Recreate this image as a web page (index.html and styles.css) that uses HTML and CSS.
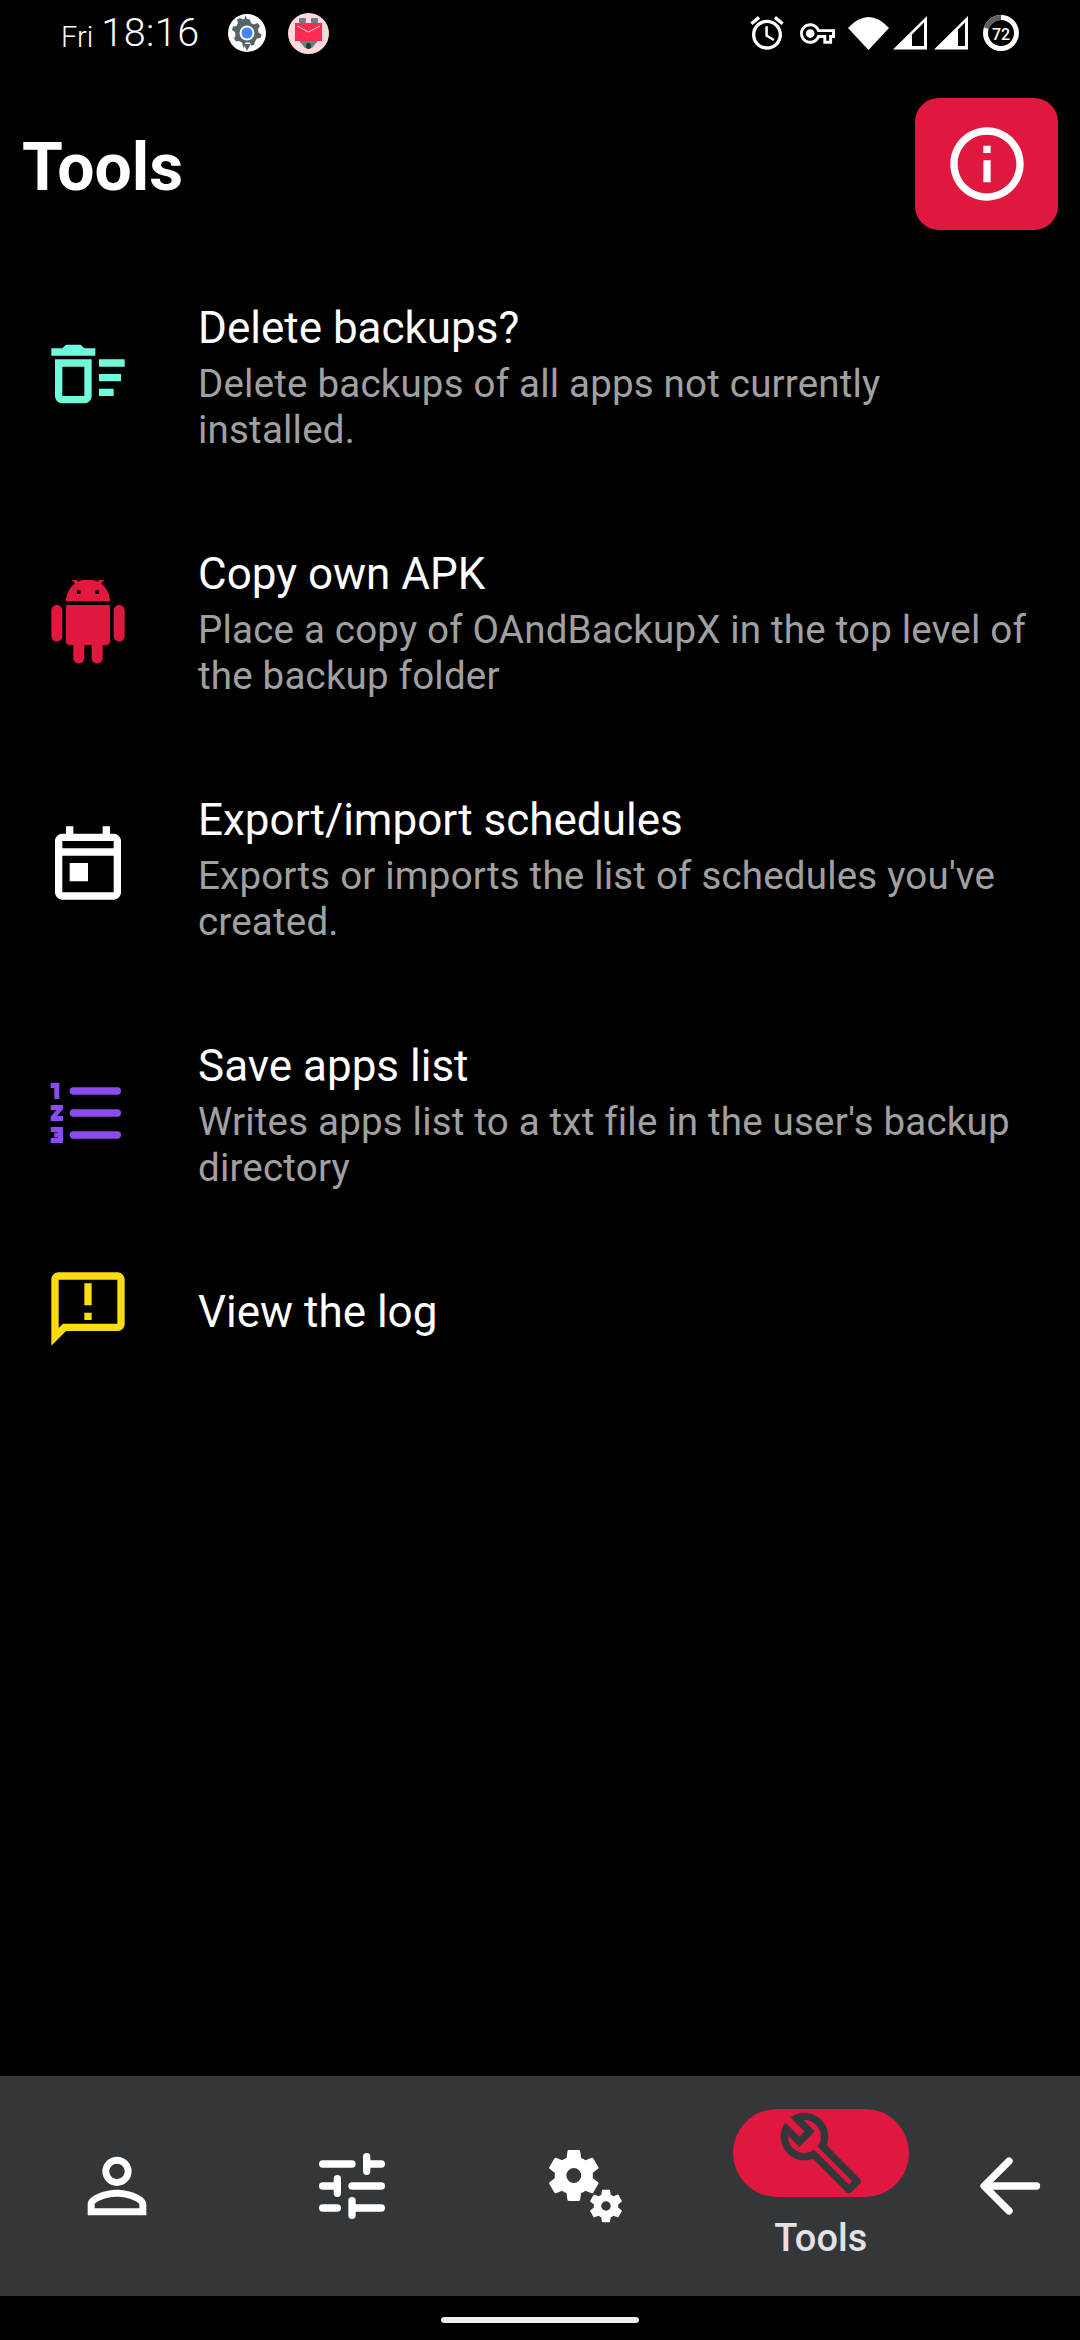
FILE: index.html
```html
<!DOCTYPE html>
<html lang="en">
<head>
<meta charset="utf-8">
<title>Tools</title>
<link rel="stylesheet" href="styles.css">
</head>
<body>
<div class="screen">
  <div class="status">
    <div class="status-left">
      <span class="day">Fri</span>
      <span class="clock">18:16</span>
      <svg class="notif-gear" viewBox="0 0 38 38"><circle cx="19" cy="19" r="19" fill="#fff"/><path fill="#57636b" d="M19 5l3 .5 1 3.500 3 1.500 3.500-1.500 2.500 3-2 3 .5 3.500 3 2-1 3.500-3.500.5-2 3-1 3.500-3 .5-1-3-3 0-1.500 0-2 6-1.500-6-3-1.500-3 .5-2-3 1.500-3-.5-3.500-3-2 1-3.500 3.500-.5 1.500-3-1-3.500 3-1.500 3 1.500 1.500-.5 1-3.500z"/><path fill="#57636b" d="M15.500 30h7L19 37z"/><circle cx="19" cy="19" r="7.500" fill="#fff"/><circle cx="19" cy="19" r="5.500" fill="#4285f4"/></svg>
      <svg class="notif-mail" viewBox="0 0 41 41"><circle cx="20.500" cy="20.500" r="20.500" fill="#ffd9de"/><rect x="11" y="5" width="7" height="5" rx="1" fill="#6f7f88"/><rect x="23" y="5" width="7" height="5" rx="1" fill="#6f7f88"/><path fill="#6f7f88" d="M12 26h17v3l-5 6H17l-5-6z"/><rect x="18" y="30" width="5" height="6" rx="2" fill="#2c3438"/><rect x="7" y="10" width="27" height="18" fill="#ff2a52"/><path fill="none" stroke="#ffd9de" stroke-width="1" d="M9 13l11.500 6L32 13"/></svg>
    </div>
    <div class="status-right">
      <svg class="si-alarm" viewBox="0 0 24 24"><path fill="#fff" d="M22 5.720l-4.600-3.860-1.290 1.530 4.600 3.860L22 5.720zM7.880 3.390L6.600 1.860 2 5.710l1.290 1.530 4.590-3.850zM12.500 8H11v6l4.750 2.850.75-1.230-4-2.370V8zM12 4c-4.970 0-9 4.030-9 9s4.030 9 9 9 9-4.030 9-9-4.030-9-9-9zm0 16c-3.870 0-7-3.130-7-7s3.130-7 7-7 7 3.130 7 7-3.130 7-7 7z"/></svg>
      <svg class="si-key" viewBox="0 0 24 24"><path fill="#fff" d="M22 19h-6v-4h-2.680c-1.140 2.420-3.600 4-6.320 4-3.860 0-7-3.140-7-7s3.140-7 7-7c2.720 0 5.170 1.580 6.320 4H24v6h-2v4zm-4-2h2v-4h2v-2H11.940l-.23-.67C11.010 8.340 9.110 7 7 7c-2.760 0-5 2.240-5 5s2.240 5 5 5c2.110 0 4.010-1.340 4.710-3.330l.23-.67H18v4zM7 15c-1.650 0-3-1.350-3-3s1.350-3 3-3 3 1.350 3 3-1.350 3-3 3z"/></svg>
      <svg class="si-wifi" viewBox="0 0 41 33"><path fill="#fff" d="M0 11Q20.500-11 41 11L20.500 33z"/></svg>
      <svg class="si-signal" viewBox="0 0 34 34"><path fill="#fff" fill-rule="evenodd" d="M0 33.500L34 0v33.500zM19 18.500V30h12V6.500z"/></svg>
      <svg class="si-signal" viewBox="0 0 34 34"><path fill="#fff" fill-rule="evenodd" d="M0 33.500L34 0v33.500zM24 13.500V30h7V6.500z"/></svg>
      <svg class="si-batt" viewBox="0 0 36 36"><circle cx="18" cy="18" r="15.500" fill="none" stroke="#fff" stroke-width="5"/><path fill="none" stroke="#5f5f5f" stroke-width="5" d="M3.300 13.200A15.500 15.500 0 0 1 18 2.500"/><text class="batt-text" x="18" y="24.500" text-anchor="middle">72</text></svg>
    </div>
  </div>

  <header class="header">
    <h1 class="title">Tools</h1>
    <button class="info-btn" type="button">
      <svg class="icon" viewBox="0 0 24 24"><path fill="#fff" d="M11 7h2v2h-2zm0 4h2v6h-2zm1-9C6.480 2 2 6.480 2 12s4.480 10 10 10 10-4.480 10-10S17.520 2 12 2zm0 18c-4.410 0-8-3.590-8-8s3.590-8 8-8 8 3.590 8 8-3.590 8-8 8z"/></svg>
    </button>
  </header>

  <main class="list">
    <div class="row">
      <svg class="icon row-icon" viewBox="0 1.090 24 24"><path fill="#70fbdc" d="M15 16h4v2h-4zm0-8h7v2h-7zm0 4h6v2h-6zM3 18c0 1.100.9 2 2 2h6c1.100 0 2-.9 2-2V8H3v10zm2-8h6v8H5v-8zm5-6H6L5 5H2v2h12V5h-3z"/></svg>
      <div class="row-text">
        <div class="row-title">Delete backups?</div>
        <div class="row-sub">Delete backups of all apps not currently installed.</div>
      </div>
    </div>
    <div class="row">
      <svg class="icon row-icon" viewBox="0 1.200 24 24"><path fill="#e0183f" d="M6 18c0 .55.45 1 1 1h1v3.500c0 .83.67 1.500 1.500 1.500s1.500-.67 1.500-1.500V19h2v3.500c0 .83.67 1.500 1.500 1.500s1.500-.67 1.500-1.500V19h1c.55 0 1-.45 1-1V8H6v10zM3.500 8C2.670 8 2 8.670 2 9.500v7c0 .83.67 1.500 1.500 1.500S5 17.330 5 16.500v-7C5 8.670 4.330 8 3.500 8zm17 0c-.83 0-1.500.67-1.500 1.500v7c0 .83.67 1.500 1.500 1.500s1.500-.67 1.500-1.500v-7c0-.83-.67-1.500-1.500-1.500zm-4.970-5.840l1.300-1.300c.2-.2.2-.51 0-.71-.2-.2-.51-.2-.71 0l-1.480 1.480C13.850 1.230 12.950 1 12 1c-.96 0-1.860.23-2.660.63L7.850.15c-.2-.2-.51-.2-.71 0-.2.2-.2.51 0 .71l1.310 1.310C6.970 3.260 6 5.010 6 7h12c0-1.990-.97-3.750-2.470-4.840zM10 5H9V4h1v1zm5 0h-1V4h1v1z"/></svg>
      <div class="row-text">
        <div class="row-title">Copy own APK</div>
        <div class="row-sub">Place a copy of OAndBackupX in the top level of the backup folder</div>
      </div>
    </div>
    <div class="row">
      <svg class="icon row-icon" viewBox="0 1.910 24 24"><path fill="#fff" d="M19 4h-1V2h-2v2H8V2H6v2H5c-1.110 0-2 .9-2 2v14c0 1.100.89 2 2 2h14c1.100 0 2-.9 2-2V6c0-1.100-.9-2-2-2zm0 16H5V10h14v10zm0-12H5V6h14v2zM7 12h5v5H7z"/></svg>
      <div class="row-text">
        <div class="row-title">Export/import schedules</div>
        <div class="row-sub">Exports or imports the list of schedules you've created.</div>
      </div>
    </div>
    <div class="row">
      <svg class="icon row-icon" viewBox="0 0.820 24 24"><path fill="#8a4cf0" stroke="#8a4cf0" stroke-width=".35" d="M2 17h2v.5H3v1h1v.5H2v1h3v-4H2v1zm1-9h1V4H2v1h1v3zm-1 3h1.800L2 13.100v.9h3v-1H3.200L5 10.900V10H2v1z"/><rect x="7" y="5" width="14" height="2" rx="1" fill="#8a4cf0"/><rect x="7" y="11" width="14" height="2" rx="1" fill="#8a4cf0"/><rect x="7" y="17" width="14" height="2" rx="1" fill="#8a4cf0"/></svg>
      <div class="row-text">
        <div class="row-title">Save apps list</div>
        <div class="row-sub">Writes apps list to a txt file in the user's backup directory</div>
      </div>
    </div>
    <div class="row">
      <svg class="icon row-icon" viewBox="0 0.820 24 24"><path fill="#fbdc14" d="M20 2H4c-1.100 0-2 .9-2 2v18l4-4h14c1.100 0 2-.9 2-2V4c0-1.100-.9-2-2-2zm0 14H5.170L4 17.170V4h16v12zM11 13h2v2h-2zm0-8h2v6h-2z"/></svg>
      <div class="row-text">
        <div class="row-title">View the log</div>
      </div>
    </div>
  </main>

  <nav class="nav">
    <div class="nav-item">
      <svg class="icon" viewBox="0 0 24 24"><path fill="#fff" d="M12 5.900c1.160 0 2.100.94 2.100 2.100s-.94 2.100-2.100 2.100S9.900 9.160 9.900 8s.94-2.100 2.100-2.100m0 9c2.970 0 6.100 1.460 6.100 2.100v1.100H5.900V17c0-.64 3.130-2.100 6.100-2.100M12 4C9.790 4 8 5.790 8 8s1.790 4 4 4 4-1.790 4-4-1.790-4-4-4zm0 9c-2.670 0-8 1.340-8 4v3h16v-3c0-2.660-5.330-4-8-4z"/></svg>
    </div>
    <div class="nav-item">
      <svg class="icon" viewBox="0 0 24 24"><path fill="none" stroke="#fff" stroke-width="2" stroke-linecap="round" d="M4 6h8M16 4v4M16 6h4M4 12h4M8 10v4M12 12h8M4 18h4M12 16v4M12 18h8"/></svg>
    </div>
    <div class="nav-item">
      <svg class="icon" viewBox="0 0 88 88">
        <defs><path id="cog" fill-rule="evenodd" d="M19.140 12.940c.04-.3.06-.61.06-.94 0-.32-.02-.64-.07-.94l2.030-1.580c.18-.14.23-.41.12-.61l-1.920-3.320c-.12-.22-.37-.29-.59-.22l-2.390.96c-.5-.38-1.030-.7-1.620-.94l-.36-2.540c-.04-.24-.24-.41-.48-.41h-3.840c-.24 0-.43.17-.47.41l-.36 2.540c-.59.24-1.130.57-1.620.94l-2.390-.96c-.22-.08-.47 0-.59.22L2.740 8.870c-.12.21-.08.47.12.61l2.030 1.580c-.05.3-.09.63-.09.94s.02.64.07.94l-2.030 1.580c-.18.14-.23.41-.12.61l1.920 3.320c.12.22.37.29.59.22l2.390-.96c.5.38 1.030.7 1.620.94l.36 2.540c.05.24.24.41.48.41h3.840c.24 0 .44-.17.47-.41l.36-2.540c.59-.24 1.130-.56 1.620-.94l2.390.96c.22.08.47 0 .59-.22l1.920-3.320c.12-.22.07-.47-.12-.61l-2.010-1.580zM12 14.800a2.800 2.800 0 1 1 0-5.600 2.800 2.800 0 0 1 0 5.600z"/></defs>
        <use href="#cog" fill="#fff" transform="translate(0 1.700) scale(2.650)"/>
        <use href="#cog" fill="#fff" transform="translate(43.600 43.600) scale(1.700)"/>
      </svg>
    </div>
    <div class="nav-item nav-item-active">
      <div class="pill">
        <svg class="icon" viewBox="0 0 24 24"><path fill="#33373a" d="M22.610 18.990l-9.080-9.080c.93-2.340.45-5.100-1.440-7C9.790.61 6.210.4 3.660 2.260L7.500 6.110 6.080 7.520 2.250 3.690C.39 6.230.6 9.820 2.900 12.110c1.860 1.860 4.570 2.350 6.890 1.480l9.110 9.110c.39.39 1.020.39 1.410 0l2.300-2.300c.4-.38.4-1.010 0-1.410zm-3 1.600l-9.460-9.460c-.61.45-1.290.72-2 .82-1.360.2-2.790-.21-3.830-1.250C3.370 9.760 2.930 8.500 3 7.260l3.090 3.090 4.240-4.240-3.090-3.090c1.240-.07 2.490.37 3.440 1.310 1.080 1.080 1.490 2.570 1.240 3.960-.12.71-.42 1.370-.88 1.960l9.450 9.450-.88.88z"/></svg>
      </div>
      <span class="nav-label">Tools</span>
    </div>
    <div class="nav-item">
      <svg class="icon" viewBox="0 0 24 24"><path fill="none" stroke="#fff" stroke-width="2" stroke-linecap="round" stroke-linejoin="round" d="M19.500 12H5.500M12 5.200L5.200 12 12 18.800"/></svg>
    </div>
  </nav>

  <div class="gesture"><div class="gesture-bar"></div></div>
</div>
</body>
</html>
```

FILE: styles.css
```css
* { box-sizing: border-box; }
html, body { margin: 0; padding: 0; background: #000; }
.screen {
  width: 1080px;
  height: 2340px;
  display: flex;
  flex-direction: column;
  background: #000;
  color: #fff;
  font-family: Roboto, "Noto Sans", sans-serif;
  overflow: hidden;
}
.icon { width: 88px; height: 88px; display: block; flex: none; }

.status {
  height: 66px;
  display: flex;
  justify-content: space-between;
  align-items: center;
  padding: 0 61px 0 61px;
}
.status-left { display: flex; align-items: center; }
.status-right { display: flex; align-items: center; }
.day { font-size: 29px; font-weight: 300; line-height: 34px; margin-top: 7px; margin-right: 8px; }
.clock { font-size: 39.500px; font-weight: 300; line-height: 44px; letter-spacing: .5px; margin-right: 28px; }
.notif-gear { width: 38px; height: 38px; margin-right: 22px; }
.notif-mail { width: 41px; height: 41px; }
.si-alarm { width: 40px; height: 40px; margin-right: 13px; margin-left: -2px; }
.si-key { width: 35px; height: 35px; margin-right: 13px; }
.si-wifi { width: 41px; height: 33px; margin-right: 4px; }
.si-signal { width: 34px; height: 34px; margin-right: 7px; }
.si-batt { width: 36px; height: 36px; margin-left: 8px; }
.batt-text { font-family: Roboto, sans-serif; font-size: 16px; font-weight: 500; fill: #fff; }

.header {
  display: flex;
  justify-content: space-between;
  align-items: center;
  padding: 32px 22px 0 22px;
}
.title { margin: 8px 0 0; font-size: 66px; font-weight: 700; line-height: 80px; }
.info-btn {
  width: 143px;
  height: 132px;
  border: 0;
  padding: 0;
  border-radius: 24px;
  background: #e0183f;
  display: flex;
  align-items: center;
  justify-content: center;
}

.list { margin-top: 24px; flex: 1; }
.row { display: flex; align-items: center; padding: 43px 44px 41px 44px; }
.row-icon { margin: -14px 0; }
.row-text { margin-left: 66px; flex: 1; }
.row-title { font-size: 44px; line-height: 62px; color: #fff; }
.row-sub { font-size: 38.500px; letter-spacing: .2px; line-height: 46px; color: #a0a0a0; margin: 2px 0 6px; }

.nav {
  height: 220px;
  background: #33373a;
  display: grid;
  grid-template-columns: repeat(4, 234.500px) 1fr;
  align-items: center;
}
.nav-item {
  display: flex;
  flex-direction: column;
  align-items: center;
}
.nav-item-active { align-self: start; padding-top: 33px; }
.pill {
  width: 176px;
  height: 88px;
  border-radius: 44px;
  background: #e0183f;
  display: flex;
  justify-content: center;
}
.nav-label { font-size: 38px; font-weight: 500; line-height: 46px; color: #e6e1e5; margin-top: 18px; }

.gesture { height: 44px; display: flex; justify-content: center; padding-top: 21px; }
.gesture-bar { width: 198px; height: 6px; border-radius: 3px; background: #eee; }
```
